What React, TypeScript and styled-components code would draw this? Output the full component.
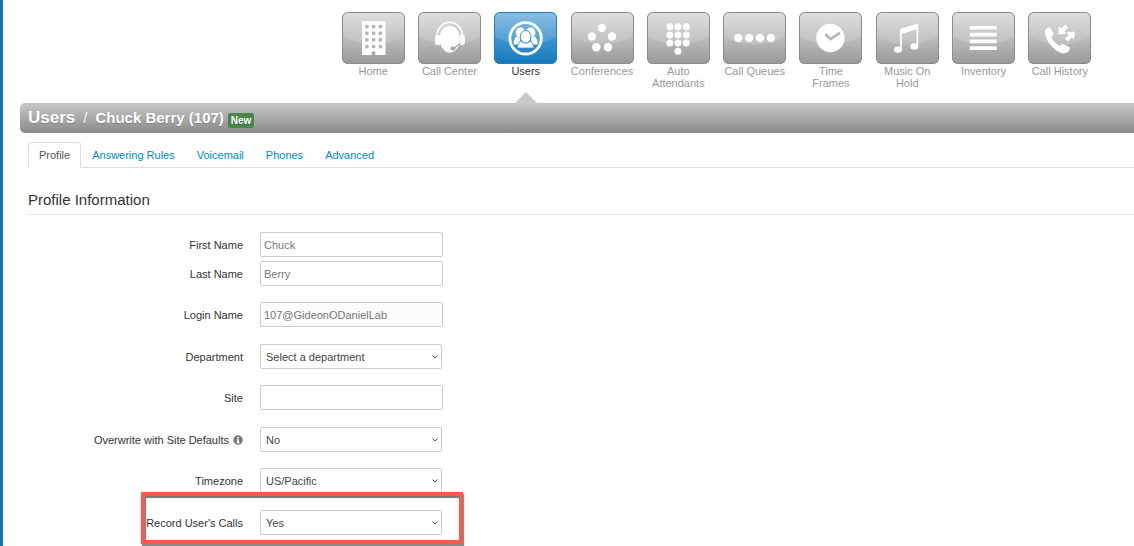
import React from 'react';
import styled, { createGlobalStyle, css } from 'styled-components';

const GlobalStyle = createGlobalStyle`
  *, *::before, *::after { box-sizing: border-box; }
  body {
    margin: 0;
    background: #fff;
    color: #333;
    font: 11px/16px "Liberation Sans", Arial, sans-serif;
  }
`;

const Page = styled.div`
  min-height: 100vh;
  padding-left: 17px;
  border-left: 3px solid #0a78b5;
`;

const Nav = styled.nav`
  display: flex;
  justify-content: flex-end;
  height: 103px;
  padding: 12px 36px 0 0;
`;

const NavList = styled.ul`
  display: grid;
  grid-template-columns: repeat(10, 1fr);
  width: 763px;
  margin: 0;
  padding: 0;
  list-style: none;
`;

const NavItem = styled.li<{ $active?: boolean }>`
  position: relative;
  ${({ $active }) =>
    $active &&
    css`
      &::after {
        content: '';
        position: absolute;
        bottom: 0;
        left: 50%;
        border: 11px solid transparent;
        border-top: 0;
        border-bottom-color: #c8c8c8;
        transform: translateX(-50%);
      }
    `}
`;

const NavLink = styled.a<{ $active?: boolean }>`
  display: flex;
  flex-direction: column;
  align-items: center;
  color: ${({ $active }) => ($active ? '#333' : '#999')};
  line-height: 12px;
  text-align: center;
  text-decoration: none;
`;

const Tile = styled.span<{ $active?: boolean }>`
  display: block;
  width: 63px;
  height: 52px;
  margin-bottom: 1px;
  overflow: hidden;
  border-radius: 6px;
  background: ${({ $active }) =>
    $active
      ? 'linear-gradient(#7ab5de, #3f95cf 50%, #1179bd)'
      : 'linear-gradient(#dadada, #bcbcbc 50%, #999)'};
  box-shadow: inset 0 0 0 1px ${({ $active }) => ($active ? '#2a7db5' : '#8c8c8c')};
  color: ${({ $active }) => ($active ? '#3a8fcb' : '#b5b5b5')};

  svg { display: block; }
`;

const NavLabel = styled.span`
  max-width: 64px;
`;

const TitleBar = styled.header`
  display: flex;
  align-items: center;
  height: 30px;
  padding-left: 8px;
  border-radius: 5px 0 0 5px;
  background: linear-gradient(#c8c8c8, #8a8a8a);
  color: #fff;
  text-shadow: 0 1px 1px rgba(0, 0, 0, 0.2);
`;

const Title = styled.h1`
  display: flex;
  align-items: baseline;
  margin: 0;
  font-size: 15px;
  line-height: 20px;
`;

const Crumb = styled.a`
  color: inherit;
  font-size: 17px;
  text-decoration: none;
`;

const Slash = styled.span`
  padding: 0 8px;
  font-weight: normal;
`;

const Badge = styled.span`
  margin: 4px 0 0 4px;
  padding: 0 3px;
  border-radius: 2px;
  background: #468847;
  font-size: 10px;
  font-weight: bold;
  line-height: 15px;
`;

const Content = styled.main`
  padding: 9px 0 0 8px;
`;

const Tabs = styled.ul`
  display: flex;
  margin: 0;
  padding: 0;
  border-bottom: 1px solid #ddd;
  list-style: none;
`;

const Tab = styled.a<{ $active?: boolean }>`
  display: block;
  margin-bottom: -1px;
  padding: 4px 10px;
  border: 1px solid ${({ $active }) => ($active ? '#ddd' : 'transparent')};
  border-bottom-color: ${({ $active }) => ($active ? '#fff' : 'transparent')};
  border-radius: 3px 3px 0 0;
  color: ${({ $active }) => ($active ? '#555' : '#0088cc')};
  text-decoration: none;
`;

const SectionTitle = styled.h2`
  margin: 22px 0 17px;
  padding-bottom: 4px;
  border-bottom: 1px solid #e8e8e8;
  font-size: 15px;
  font-weight: normal;
  line-height: 20px;
`;

const Row = styled.div<{ $tight?: boolean }>`
  position: relative;
  display: grid;
  grid-template-columns: 215px 183px;
  column-gap: 17px;
  align-items: center;
  margin-bottom: ${({ $tight }) => ($tight ? '4px' : '16px')};

  &:nth-child(odd) {
    margin-bottom: ${({ $tight }) => ($tight ? '4px' : '17px')};
  }

  &:last-child { margin-bottom: 0; }
`;

const Label = styled.label`
  display: flex;
  align-items: center;
  justify-content: flex-end;
  gap: 4px;
`;

const fieldStyle = css`
  height: 25px;
  border: 1px solid #ccc;
  border-radius: 2px;
  background: #fff;
  font: inherit;
`;

const TextInput = styled.input`
  ${fieldStyle}
  width: 100%;
  padding: 0 3px;
  color: #777;

  &[readonly] { background: #fbfbfb; }
`;

const SelectBox = styled.div`
  display: grid;
  align-items: center;
  padding-right: 1px;

  > * { grid-area: 1 / 1; }

  svg {
    justify-self: end;
    margin-right: 4px;
    pointer-events: none;
  }
`;

const Select = styled.select`
  ${fieldStyle}
  appearance: none;
  width: 100%;
  padding: 0 20px 0 5px;
  color: #444;
`;

const Highlight = styled.div`
  position: absolute;
  inset: -18px auto -9px 113px;
  width: 322px;
  border: 4px solid #fb594b;
  box-shadow: 1px 2px 1px rgba(60, 60, 60, 0.6), inset 1px 2px 1px rgba(60, 60, 60, 0.7);
  pointer-events: none;
`;

const dots = (points: number[][], r: number) =>
  points.map(([x, y]) => <circle key={`${x}-${y}`} cx={x} cy={y} r={r} />);

const glyphs: Record<string, React.ReactNode> = {
  Home: (
    <>
      <path d="M20 9h23.500v34H33.300v-3.500h-3.600V43H20z" />
      <g fill="currentColor">
        {[13, 19.600, 26.200, 33].map((y) =>
          [23.200, 30, 36.700].map((x) => <rect key={`${x}-${y}`} x={x} y={y} width="3.300" height="3.300" />),
        )}
      </g>
    </>
  ),
  'Call Center': (
    <>
      <path d="M19 25C19 5.500 44.500 5.500 44.500 25" fill="none" stroke="#fff" strokeWidth="1.700" />
      <path d="M22 24C22.500 10.500 40.500 10.500 41.500 24V31C40 36 36.500 40.800 31.800 40.800S23.500 36 22 31z" />
      <path d="M17 24.500q0-1.500 2-1.500h3v10h-3q-2 0-2-2zM46.800 24.500q0-1.500-2-1.500h-3v10h3q2 0 2-2z" />
      <path d="M42.500 31.500Q40 33 36 36" fill="none" stroke="#a5a5a5" strokeWidth="1.300" />
      <ellipse cx="35" cy="36.400" rx="2.500" ry="2" fill="#a5a5a5" />
    </>
  ),
  Users: (
    <>
      <circle cx="31.600" cy="26.300" r="15.700" fill="none" stroke="#fff" strokeWidth="2.800" />
      <ellipse cx="26.500" cy="20.500" rx="4.700" ry="5.200" />
      <ellipse cx="36.700" cy="20.500" rx="4.700" ry="5.200" />
      <path d="M22 24.500l5 2-2.500 6h-5q0-5 2.500-8zM41.200 24.500l-5 2 2.500 6h5q0-5-2.500-8z" />
      <path
        d="M26.500 29q5.100 4 10.200 0 2.500 2.500 3.500 7h-17.200q1-4.500 3.500-7z"
        stroke="currentColor"
        strokeWidth="0.800"
      />
      <ellipse cx="31.600" cy="24.800" rx="5.300" ry="6.300" stroke="currentColor" strokeWidth="1" />
    </>
  ),
  Conferences: dots([[31, 16], [21, 24.500], [41, 24.500], [25.300, 35.200], [37, 35.200]], 4.200),
  'Auto Attendants': dots(
    [14.700, 23, 31].flatMap((y) => [22.800, 31, 39.300].map((x) => [x, y])).concat([[31, 39.300]]),
    3.500,
  ),
  'Call Queues': dots([[15.300, 26], [26.200, 26], [37, 26], [47.900, 26]], 4.200),
  'Time Frames': (
    <>
      <circle cx="31.400" cy="26" r="14.200" />
      <path d="M26.300 22l5.200 5 9.300-6.200" fill="none" stroke="currentColor" strokeWidth="2.600" />
    </>
  ),
  'Music On Hold': (
    <>
      <path d="M24 17l18.300-5.800v23h-1.800V17.300L25.800 22v15.700H24z" />
      <ellipse cx="22" cy="37.600" rx="4" ry="3.200" />
      <ellipse cx="38.300" cy="34.400" rx="4" ry="3.200" />
    </>
  ),
  Inventory: <path d="M17.700 14h27v3.600h-27zM17.700 20.800h27v3.600h-27zM17.700 27.600h27v3.600h-27zM17.700 34.300h27v3.600h-27z" />,
  'Call History': (
    <>
      <path d="M17 18.500q1.200-3 4.700-3.600l4 6.500q.2 1.700-2.500 3.200 2 6.300 8.700 9.200 1.800-2 3.300-1.700l6.800 3.500q.4 1.200-1.500 4-1.500 1.800-5.500 1.800Q28 40.500 21 31 16.500 24 17 18.500z" />
      <path d="M30.300 22.500l.7-8.300 2.300 2.200 3.800-3.800 3 3-3.800 3.800 2.300 2.300zM46.800 19.500l-.7 8.300-2.300-2.200-4 4-3-3 4-4-2.300-2.300z" />
    </>
  ),
};

const navItems = Object.keys(glyphs);
const tabItems = ['Profile', 'Answering Rules', 'Voicemail', 'Phones', 'Advanced'];

function NavIcon({ name }: { name: string }) {
  return (
    <svg width="63" height="52" viewBox="0 0 63 52" fill="#fff" aria-hidden="true">
      <path d="M1 1h61v24Q31.500 40 1 25z" opacity="0.130" />
      {glyphs[name]}
    </svg>
  );
}

function InfoIcon() {
  return (
    <svg width="10" height="10" viewBox="0 0 10 10" aria-hidden="true">
      <circle cx="5" cy="5" r="4.700" fill="#777" />
      <path d="M4 2h2v1.300H4zM3.600 4.200H6v3h.7v1H3.500v-1h.7v-2h-.6z" fill="#fff" />
    </svg>
  );
}

type FieldProps = {
  id: string;
  label: string;
  value: string;
  tight?: boolean;
  readOnly?: boolean;
};

function TextField({ id, label, value, tight, readOnly }: FieldProps) {
  return (
    <Row $tight={tight}>
      <Label htmlFor={id}>{label}</Label>
      <TextInput id={id} type="text" defaultValue={value} readOnly={readOnly} />
    </Row>
  );
}

type SelectFieldProps = {
  id: string;
  label: string;
  options: string[];
  info?: boolean;
  highlighted?: boolean;
};

function SelectField({ id, label, options, info, highlighted }: SelectFieldProps) {
  return (
    <Row>
      <Label htmlFor={id}>
        {label}
        {info && <InfoIcon />}
      </Label>
      <SelectBox>
        <Select id={id}>
          {options.map((option) => (
            <option key={option}>{option}</option>
          ))}
        </Select>
        <svg width="6" height="4" viewBox="0 0 6 4" fill="none" stroke="#555" aria-hidden="true">
          <path d="M.5 .5L3 3 5.500 .5" />
        </svg>
      </SelectBox>
      {highlighted && <Highlight />}
    </Row>
  );
}

export default function App() {
  return (
    <Page>
      <GlobalStyle />
      <Nav>
        <NavList>
          {navItems.map((name) => {
            const active = name === 'Users';
            return (
              <NavItem key={name} $active={active}>
                <NavLink href="#" $active={active}>
                  <Tile $active={active}>
                    <NavIcon name={name} />
                  </Tile>
                  <NavLabel>{name}</NavLabel>
                </NavLink>
              </NavItem>
            );
          })}
        </NavList>
      </Nav>
      <TitleBar>
        <Title>
          <Crumb href="#">Users</Crumb>
          <Slash>/</Slash>
          Chuck Berry (107)
        </Title>
        <Badge>New</Badge>
      </TitleBar>
      <Content>
        <Tabs>
          {tabItems.map((name) => (
            <li key={name}>
              <Tab href="#" $active={name === 'Profile'}>
                {name}
              </Tab>
            </li>
          ))}
        </Tabs>
        <SectionTitle>Profile Information</SectionTitle>
        <form>
          <TextField id="first-name" label="First Name" value="Chuck" tight />
          <TextField id="last-name" label="Last Name" value="Berry" />
          <TextField id="login-name" label="Login Name" value="107@GideonODanielLab" readOnly />
          <SelectField id="department" label="Department" options={['Select a department']} />
          <TextField id="site" label="Site" value="" />
          <SelectField id="overwrite" label="Overwrite with Site Defaults" options={['No', 'Yes']} info />
          <SelectField id="timezone" label="Timezone" options={['US/Pacific']} />
          <SelectField id="record-calls" label="Record User's Calls" options={['Yes', 'No']} highlighted />
        </form>
      </Content>
    </Page>
  );
}
